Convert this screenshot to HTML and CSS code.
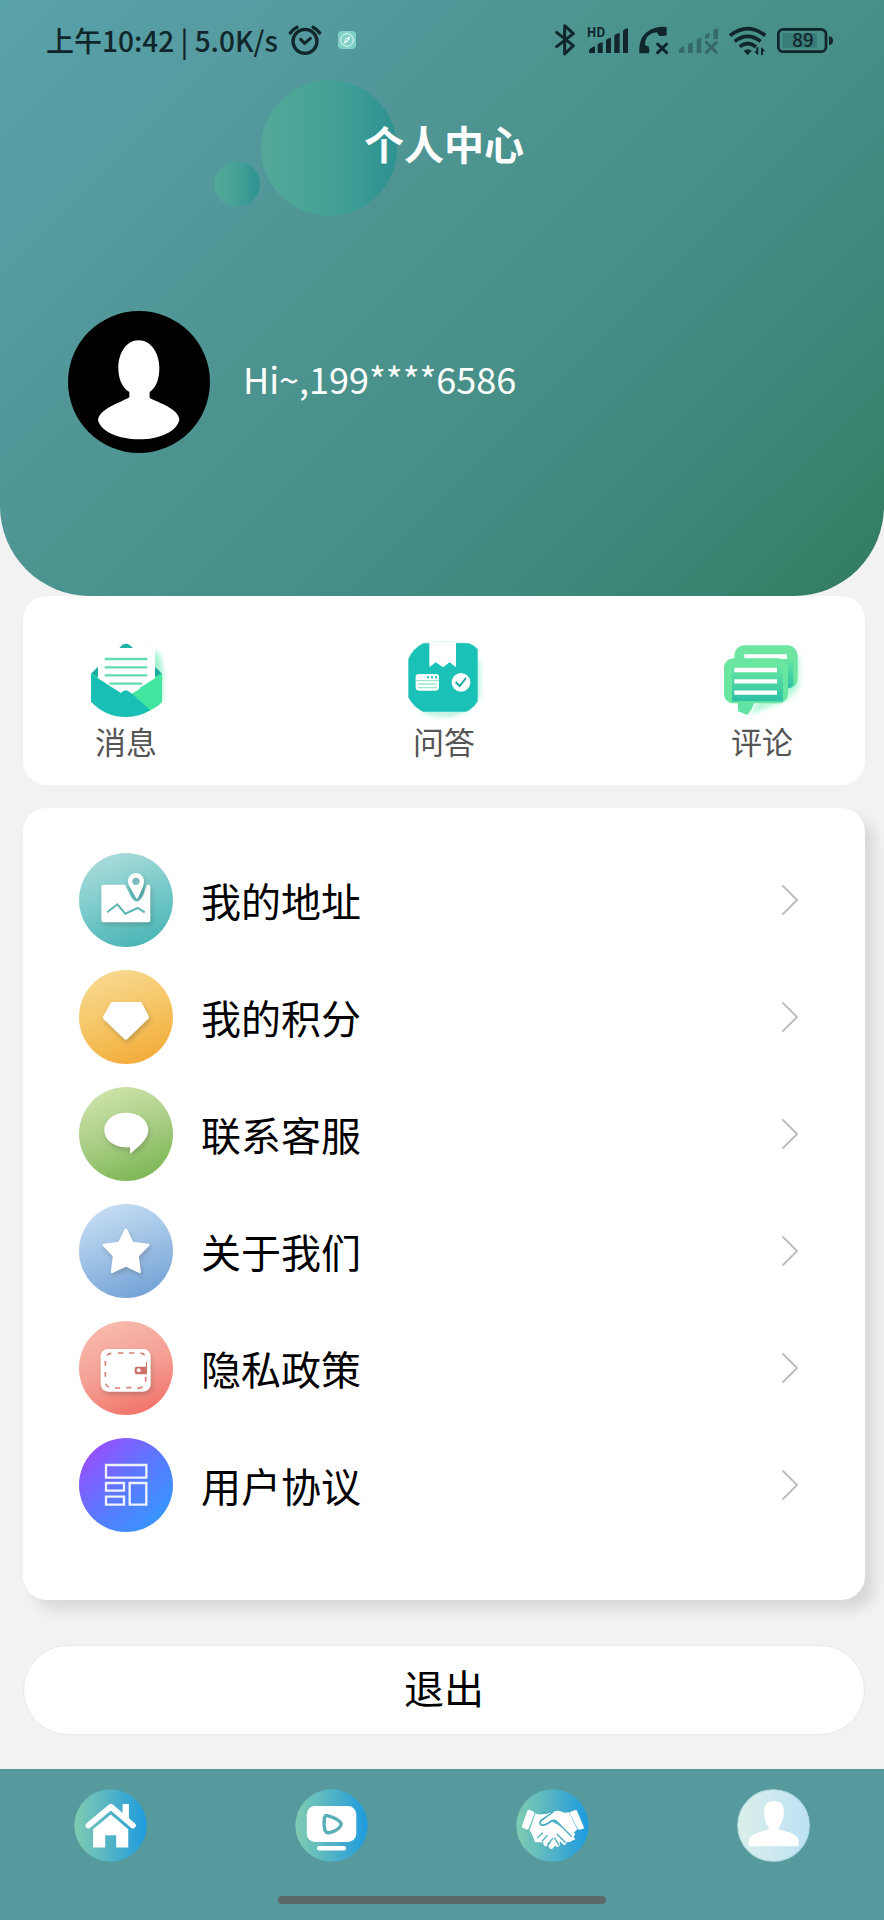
FILE: index.html
```html
<!DOCTYPE html>
<html lang="zh-CN">
<head>
<meta charset="utf-8">
<meta name="viewport" content="width=device-width, initial-scale=1">
<title>个人中心</title>
<link rel="stylesheet" href="styles.css">
</head>
<body>
<header class="hero">
  <span class="bubble bubble-large"></span>
  <span class="bubble bubble-small"></span>

  <div class="status">
    <span class="status-text">上午10:42 | 5.0K/s</span>
    <svg class="status-alarm" viewBox="864 72 102 96" width="34" height="32" aria-hidden="true">
      <g fill="none" stroke="#10262b" stroke-linecap="round" stroke-linejoin="round">
        <circle cx="915" cy="124" r="36" stroke-width="10"/>
        <path d="M902 118l12 12 17-15" stroke-width="9"/>
        <path d="M871 99q8-11 20-17M959 99q-8-11-20-17" stroke-width="10"/>
      </g>
    </svg>
    <svg class="status-app" viewBox="0 0 54 54" width="18" height="18" aria-hidden="true">
      <rect width="54" height="54" rx="12" fill="#7ed0c8"/>
      <circle cx="27" cy="27" r="19" fill="none" stroke="#e9fbf8" stroke-width="3"/>
      <path d="M38 15L31 31 16 39 23 23z" fill="#fff"/>
      <circle cx="27" cy="27" r="3" fill="#7ed0c8"/>
    </svg>

    <div class="status-icons">
      <svg viewBox="340 72 63 96" width="21" height="32" aria-hidden="true">
        <path d="M345 97l50 40-26 25V77l26 24-50 39" fill="none" stroke="#10262b" stroke-width="9" stroke-linecap="round" stroke-linejoin="round"/>
      </svg>
      <svg class="signal" viewBox="429 72 123 96" width="41" height="32" aria-hidden="true">
        <text x="428" y="111" class="hd-label">HD</text>
        <g fill="#10262b">
          <path d="M435 159v-6q0-9 18-14v20z"/>
          <path d="M461 159v-24q0-5 15-8v32z"/>
          <path d="M486 159v-37q0-6 15-9v46z"/>
          <path d="M511 159v-51q0-6 16-9v60z"/>
          <path d="M537 159V94q0-6 15-9v74z"/>
        </g>
      </svg>
      <svg viewBox="585 72 87 96" width="29" height="32" aria-hidden="true">
        <path d="M586 160q-3-43 22-63 25-19 60-16v25q-11 4-23 1l-6-10q-36 4-36 38l11 5q4 11 0 20z" fill="#10262b"/>
        <path d="M641 132l27 26M668 132l-27 26" stroke="#10262b" stroke-width="9" stroke-linecap="round"/>
      </svg>
      <svg class="faded" viewBox="705 72 117 96" width="39" height="32" aria-hidden="true">
        <g fill="#10262b">
          <path d="M705 159v-6q0-9 16-14v20z"/>
          <path d="M732 159v-24q0-5 14-8v32z"/>
          <path d="M758 159v-37q0-6 14-9v46z"/>
          <path d="M783 116v-8q0-6 13-9v15zM808 118V94q0-6 14-9v32z"/>
        </g>
        <path d="M787 127l30 30M817 127l-30 30" stroke="#10262b" stroke-width="9" stroke-linecap="round"/>
      </svg>
      <svg viewBox="855 72 111 96" width="37" height="32" aria-hidden="true">
        <g fill="none" stroke="#10262b" stroke-width="11">
          <path d="M858 107q53-42 106 0"/>
          <path d="M872 124q39-30 78 0"/>
          <path d="M887 140q24-19 49 0"/>
        </g>
        <path d="M899 153q12-10 24 0l-12 12z" fill="#10262b"/>
        <path d="M943 142v22h-3l-9-10h6v-12zM951 165v-22h3l10 11h-7v11z" fill="#10262b"/>
      </svg>
      <svg viewBox="1005 72 168 96" width="56" height="32" aria-hidden="true">
        <rect x="1009" y="88" width="143" height="67" rx="15" fill="none" stroke="#10262b" stroke-width="8"/>
        <rect x="1022" y="99" width="103" height="45" rx="5" fill="#3a7c77"/>
        <path d="M1161 109q12 1 12 13t-12 13z" fill="#10262b"/>
        <text x="1083" y="142" text-anchor="middle" class="battery-label">89</text>
      </svg>
    </div>
  </div>

  <h1 class="title">个人中心</h1>

  <div class="profile">
    <svg class="avatar" viewBox="84 62 426 426" role="img" aria-label="头像">
      <circle cx="297" cy="275" r="213" fill="#000"/>
      <path d="M296 150c38 0 62 40 62 82 0 30-7 57-29 73v18c30 15 88 34 89 65-8 36-60 59-121 59s-114-23-123-57c3-34 62-50 94-69v-16c-24-15-33-43-33-73 0-42 23-82 61-82z" fill="#fff"/>
    </svg>
    <span class="greeting">Hi~,199****6586</span>
  </div>
</header>

<main class="content">
  <nav class="shortcuts" aria-label="快捷入口">
    <a class="shortcut" href="#messages">
      <svg viewBox="255 240 246 240" width="82" height="80" aria-hidden="true">
        <defs>
          <filter id="glow" x="-20%" y="-20%" width="150%" height="150%"><feGaussianBlur stdDeviation="8"/></filter>
        </defs>
        <path d="M440 268l40 14 10 60-4 80-50 20z" fill="#a4f5d4" filter="url(#glow)"/>
        <path d="M358 264q19-26 41 0z" fill="#1cb5a8"/>
        <path d="M273 341l21-21v60zM486 341l-21-21v60z" fill="#19ad9f"/>
        <path d="M273 340l50 30 107-2 56-28v86q-14 16-40 27L300 430z" fill="#43e6a1"/>
        <path d="M294 277q0-13 13-13h145q13 0 13 13v78l-80 50h-20l-71-50z" fill="#fff"/>
        <path d="M314 297h128M314 322h128M314 346h128M328 371h98" stroke="#62dcb3" stroke-width="7"/>
        <path d="M336 376l29 22q12-13 24 1l21-22 10 9-32 20z" fill="#fff"/>
        <path d="M273 342l90 57q13-16 30 0l58 52q-32 20-72 20-63 0-106-46z" fill="#19bfb5"/>
      </svg>
      <span class="shortcut-label">消息</span>
    </a>
    <a class="shortcut" href="#questions">
      <svg viewBox="1209 240 246 240" width="82" height="80" aria-hidden="true">
        <path d="M1270 440h110l50-150 10 20v100l-45 45q-65 30-129 0z" fill="#b6f3df" filter="url(#glow)"/>
        <path d="M1270 248q60-8 130 0l-1 10h-129zM1262 450h143q-70 34-143 0z" fill="#c9f3e8"/>
        <path d="M1270 250h136q18 6 27 18v156q-13 22-34 31h-130q-28-12-44-43V297q14-32 45-47z" fill="#19c1b7"/>
        <path d="M1288 246h80v76l-19-15-20 15-22-15-19 15z" fill="#fff"/>
        <rect x="1247" y="342" width="70" height="50" rx="10" fill="#fff"/>
        <path d="M1247 362h70M1254 372h56M1254 383h56" stroke="#9be7cf" stroke-width="4"/>
        <path d="M1281 352h6M1293 352h6M1305 352h6" stroke="#19c1b7" stroke-width="6"/>
        <circle cx="1383" cy="367" r="28" fill="#fff"/>
        <path d="M1367 366l12 12 19-24" fill="none" stroke="#19aaa2" stroke-width="6"/>
      </svg>
      <span class="shortcut-label">问答</span>
    </a>
    <a class="shortcut" href="#comments">
      <svg viewBox="837 240 246 240" width="82" height="80" aria-hidden="true">
        <defs>
          <linearGradient id="bubbleFill" x1="0" y1="0" x2="0" y2="1">
            <stop offset="0" stop-color="#68e6a0"/><stop offset="1" stop-color="#2bc0a8"/>
          </linearGradient>
        </defs>
        <path d="M1040 280l32 10v90l-36 40-116 45z" fill="#b6f8da" filter="url(#glow)"/>
        <rect x="877" y="256" width="190" height="130" rx="30" fill="#6de6a2"/>
        <path d="M1022 296h32v80q-8 12-26 8z" fill="url(#bubbleFill)"/>
        <path d="M907 290h128" stroke="#fff" stroke-width="14"/>
        <path d="M888 425h50q-8 24-22 40l-28-11z" fill="#62e2a3"/>
        <rect x="846" y="295" width="192" height="135" rx="28" fill="#69e7a1"/>
        <path d="M870 318h153v106H870z" fill="url(#bubbleFill)"/>
        <path d="M877 330h128M877 364h128M877 398h128" stroke="#fff" stroke-width="13"/>
      </svg>
      <span class="shortcut-label">评论</span>
    </a>
  </nav>

  <nav class="menu" aria-label="菜单">
    <a class="menu-row" href="#address">
      <span class="menu-icon menu-icon-address">
        <svg viewBox="57 69 282 282" aria-hidden="true">
          <path class="glyph" d="M131 164h64l20 40q16 22 31-4l15-36h4q6 0 6 6v101q0 6-6 6H130q-6 0-6-6V170q0-6 7-6z"/>
          <path d="M206 166l20 36q4 7 8 0l20-38q4 34-22 50-24-11-26-48z" fill="#5abbbb"/>
          <path class="glyph" fill-rule="evenodd" d="M228 129c-14 0-24 11-24 25 0 15 17 33 24 50q3 5 6 0c7-17 18-35 18-50 0-14-10-25-24-25zm0 14a11 11 0 1 1 0 22 11 11 0 0 1 0-22z"/>
          <path d="M142 247l30-24 24 28 37-17 21 13" fill="none" stroke="#5bb5b3" stroke-width="6"/>
        </svg>
      </span>
      <span class="menu-label">我的地址</span>
      <svg class="chevron" viewBox="0 0 16 30" aria-hidden="true"><path d="M1 1l14 14L1 29"/></svg>
    </a>
    <a class="menu-row" href="#points">
      <span class="menu-icon menu-icon-points">
        <svg viewBox="57 420 282 282" aria-hidden="true">
          <path class="glyph" d="M157 516h83q4 0 6 4l20 38q2 4-1 8l-62 60q-5 6-11 0l-61-58q-4-4-1-9l22-39q2-4 5-4z"/>
        </svg>
      </span>
      <span class="menu-label">我的积分</span>
      <svg class="chevron" viewBox="0 0 16 30" aria-hidden="true"><path d="M1 1l14 14L1 29"/></svg>
    </a>
    <a class="menu-row" href="#service">
      <span class="menu-icon menu-icon-service">
        <svg viewBox="57 771 282 282" aria-hidden="true">
          <path class="glyph" d="M198 848c38 0 67 22 67 52 0 26-24 46-55 72v-20c-44 3-77-20-77-52 0-30 29-52 65-52z"/>
        </svg>
      </span>
      <span class="menu-label">联系客服</span>
      <svg class="chevron" viewBox="0 0 16 30" aria-hidden="true"><path d="M1 1l14 14L1 29"/></svg>
    </a>
    <a class="menu-row" href="#about">
      <span class="menu-icon menu-icon-about">
        <svg viewBox="57 42 282 282" aria-hidden="true">
          <path class="glyph glyph-star" d="M198 119l20 40 47 6-32 33 6 48-41-20-42 20 6-48-31-33 46-6z"/>
        </svg>
      </span>
      <span class="menu-label">关于我们</span>
      <svg class="chevron" viewBox="0 0 16 30" aria-hidden="true"><path d="M1 1l14 14L1 29"/></svg>
    </a>
    <a class="menu-row" href="#privacy">
      <span class="menu-icon menu-icon-privacy">
        <svg viewBox="57 393 282 282" aria-hidden="true">
          <rect class="glyph" x="122" y="477" width="150" height="128" rx="22"/>
          <path d="M141 496q5-6 13-6M174 489h16M207 489h16M241 489q9 1 13 7M136 513v14M136 546v14M137 581q2 8 10 11M165 594h15M199 593h15M232 595q10 0 16-5M257 560v15" fill="none" stroke="#d77f78" stroke-width="5"/>
          <path d="M258 516v14h-27q-7 0-7 7v9q0 7 7 7h30v-37z" fill="#cf6f69"/>
          <circle cx="236" cy="541" r="6" fill="#fff"/>
        </svg>
      </span>
      <span class="menu-label">隐私政策</span>
      <svg class="chevron" viewBox="0 0 16 30" aria-hidden="true"><path d="M1 1l14 14L1 29"/></svg>
    </a>
    <a class="menu-row" href="#terms">
      <span class="menu-icon menu-icon-terms">
        <svg viewBox="57 744 282 282" aria-hidden="true">
          <path d="M138 825h121v38H138zM138 879h54v23H138zM138 920h54v24H138zM209 879h50v65h-50z" fill="none" stroke="#eef1ff" stroke-width="7"/>
        </svg>
      </span>
      <span class="menu-label">用户协议</span>
      <svg class="chevron" viewBox="0 0 16 30" aria-hidden="true"><path d="M1 1l14 14L1 29"/></svg>
    </a>
  </nav>

  <button class="logout" type="button">退出</button>
</main>

<footer class="tabbar">
  <nav class="tabs" aria-label="主导航">
    <a class="tab" href="#home" aria-label="首页">
      <svg viewBox="222 144 218 218" aria-hidden="true">
        <defs>
          <linearGradient id="tabFill">
            <stop offset="0" stop-color="#80cbb2"/><stop offset=".5" stop-color="#52b3c6"/><stop offset="1" stop-color="#1d9bdf"/>
          </linearGradient>
        </defs>
        <circle cx="331" cy="253" r="108" fill="url(#tabFill)"/>
        <path d="M279 319v-55l53-44 52 44v55h-36v-37h-33v37z" fill="#fff"/>
        <path d="M367 222v-33h19v50z" fill="#fff"/>
        <path d="M265 253l67-56 66 56" fill="none" stroke="#fff" stroke-width="17" stroke-linecap="round" stroke-linejoin="round"/>
      </svg>
    </a>
    <a class="tab" href="#video" aria-label="视频">
      <svg viewBox="885 144 218 218" aria-hidden="true">
        <circle cx="994" cy="253" r="108" fill="url(#tabFill)"/>
        <rect x="920" y="195" width="148" height="107" rx="25" fill="#fff"/>
        <path d="M973 229q3-8 11-5 28 8 37 20 4 6-1 12-11 14-31 18-10 3-14-5-5-17-2-40z" fill="none" stroke="#5aaeb5" stroke-width="10" stroke-linejoin="round"/>
        <path d="M957 321h74" stroke="#fff" stroke-width="13" stroke-linecap="round"/>
      </svg>
    </a>
    <a class="tab" href="#partner" aria-label="合作">
      <svg viewBox="222 144 218 218" aria-hidden="true">
        <circle cx="331" cy="253" r="108" fill="url(#tabFill)"/>
        <g fill="#fff">
          <path d="M257 207q3-2 7 0l11 5q3 2 2 6l-17 44q-2 4-6 3l-12-5q-4-2-2-6zM385 212l14-5q4-1 5 2l20 48q2 4-1 6l-12 3q-4 0-5-3l-23-46q-2-4 2-5z"/>
          <path d="M280 217q17 8 40-3l8 2-33 20q-9 13 2 18 12 3 33-12l20 10 50 41-18 9-103 1q-10-28-16-36z"/>
          <path d="M303 250q-12-3-4-12l35-25q12-7 24-1 12 5 22 1l25 52q-12 13-23 17l-40-41q-7-7-15-2-14 10-24 11z"/>
        </g>
        <g stroke="#fff" stroke-width="15" stroke-linecap="round">
          <path d="M282 286l7-6M296 296l12-11M311 307l14-15M327 315l8-9M336 290l10 19M347 280l19 23M358 273l20 18M350 264l40 16M290 265l50 20"/>
        </g>
        <path d="M331 214l-32 23q-9 10 0 15 9 2 27-12 10-6 18 1l43 44M303 214q10 4 18 0M287 290l14-15M301 299l14-16M317 309l14-17M337 291l13 20M345 279l24 24" fill="none" stroke="#4aadbf" stroke-width="4" stroke-linecap="round" stroke-linejoin="round"/>
      </svg>
    </a>
    <a class="tab" href="#me" aria-label="我的" aria-current="page">
      <svg viewBox="885 144 218 218" aria-hidden="true">
        <defs>
          <linearGradient id="tabActiveFill">
            <stop offset="0" stop-color="#dcefeb"/><stop offset="1" stop-color="#bce1f4"/>
          </linearGradient>
        </defs>
        <circle cx="994" cy="253" r="107" fill="url(#tabActiveFill)" stroke="#b5dde2" stroke-width="3"/>
        <path d="M995 180c21 0 31 13 30 34-1 20-7 34-15 45v6c20 5 56 13 59 31v19H920v-19c4-18 40-26 60-31v-6c-8-11-13-25-14-45-1-21 9-34 29-34z" fill="#fff"/>
      </svg>
    </a>
  </nav>
  <span class="home-indicator"></span>
</footer>
</body>
</html>
```

FILE: styles.css
```css
* {
  box-sizing: border-box;
}

body {
  margin: 0;
  min-height: 100vh;
  display: flex;
  flex-direction: column;
  background: #f2f2f2;
  color: #000;
  font-family: "Noto Sans CJK SC", "Noto Sans", sans-serif;
}

a {
  color: inherit;
  text-decoration: none;
}

svg {
  display: block;
  flex: none;
}

/* Header */
.hero {
  position: relative;
  padding-bottom: 143px;
  border-radius: 0 0 90px 90px;
  background: linear-gradient(135deg, #58a2aa 0%, #559a9f 22%, #4a928c 48%, #41897e 76%, #36806a 92%, #327a64 100%);
}

.bubble {
  position: absolute;
  border-radius: 50%;
  background: linear-gradient(90deg, #54a898, #43a096 55%, #2d9292);
}

.bubble-large {
  top: 80px;
  left: 261px;
  width: 136px;
  height: 136px;
}

.bubble-small {
  top: 161px;
  left: 214px;
  width: 46px;
  height: 46px;
}

.status {
  position: relative;
  display: flex;
  align-items: center;
  height: 80px;
  padding: 0 51px 0 46px;
  color: #10262b;
}

.status-text {
  font-size: 28px;
  font-weight: 500;
  line-height: 32px;
  white-space: nowrap;
}

.status-alarm {
  margin-left: 10px;
}

.status-app {
  margin-left: 16px;
}

.status-icons {
  display: flex;
  gap: 11px;
  margin-left: auto;
}

.signal {
  overflow: visible;
}

.hd-label {
  font-size: 38px;
  font-weight: 700;
  fill: #10262b;
}

.battery-label {
  font-size: 56px;
  font-weight: 500;
  fill: #10262b;
}

.faded {
  opacity: 0.35;
}

.title {
  position: relative;
  margin: 0;
  padding: 0 0 4px 4px;
  color: #fff;
  font-size: 40px;
  font-weight: 700;
  line-height: 126px;
  text-align: center;
}

.profile {
  display: flex;
  align-items: center;
  gap: 33px;
  padding: 101px 68px 0;
}

.avatar {
  width: 142px;
  height: 142px;
}

.greeting {
  padding-bottom: 8px;
  color: #fff;
  font-size: 36px;
  line-height: 48px;
}

/* Cards */
.content {
  flex: 1;
  padding: 0 19px 34px 23px;
}

.shortcuts,
.menu {
  border-radius: 24px;
  background: #fff;
}

.shortcuts {
  display: flex;
  justify-content: space-between;
  padding: 44px 62px 24px;
}

.shortcut {
  display: flex;
  flex-direction: column;
  align-items: center;
}

.shortcut-label {
  color: #555;
  font-size: 31px;
  line-height: 41px;
}

.menu {
  display: flex;
  flex-direction: column;
  gap: 23px;
  margin-top: 23px;
  padding: 45px 67px 68px 56px;
  box-shadow: 10px 10px 12px #d9d9d9;
}

.menu-row {
  display: flex;
  align-items: center;
}

.menu-icon {
  width: 94px;
  height: 94px;
  border-radius: 50%;
}

.menu-icon-address {
  background: linear-gradient(160deg, #b5dede, #7fcccc 45%, #3fb0b0);
}

.menu-icon-points {
  background: linear-gradient(160deg, #f8dc98, #f5c564 50%, #f2a62f);
}

.menu-icon-service {
  background: linear-gradient(160deg, #d6e8b2, #a8cd83 50%, #72b24a);
}

.menu-icon-about {
  background: linear-gradient(160deg, #cde3f5, #9dc1e5 50%, #6b9bd3);
}

.menu-icon-privacy {
  background: linear-gradient(160deg, #f8c0b2, #f5a095 50%, #f0695f);
}

.menu-icon-terms {
  background: linear-gradient(135deg, #9d4bfd 8%, #5b78ff 50%, #3598ff 90%);
}

.glyph {
  fill: #fff;
  filter: drop-shadow(4px 8px 6px rgba(60, 60, 60, 0.25));
}

.glyph-star {
  stroke: #fff;
  stroke-width: 7;
  stroke-linejoin: round;
}

.menu-label {
  margin-left: 28px;
  font-size: 40px;
  line-height: 60px;
}

.chevron {
  width: 16px;
  height: 30px;
  margin-left: auto;
  fill: none;
  stroke: #bfbfbf;
  stroke-width: 2;
  stroke-linecap: round;
}

.logout {
  display: block;
  width: 100%;
  height: 90px;
  margin-top: 45px;
  padding: 0 0 6px;
  border: 1px solid #e9e9e9;
  border-radius: 45px;
  background: #fff;
  color: #000;
  font-family: inherit;
  font-size: 40px;
  line-height: 60px;
}

/* Bottom navigation */
.tabbar {
  display: flex;
  flex-direction: column;
  align-items: center;
  gap: 34px;
  padding: 20px 0 18px;
  background: #569a9d;
}

.tabs {
  display: flex;
  width: 100%;
}

.tab {
  flex: 1;
  display: flex;
  justify-content: center;
}

.tab svg {
  width: 73px;
  height: 73px;
}

.home-indicator {
  width: 37%;
  height: 8px;
  border-radius: 4px;
  background: #5d6868;
}
```
